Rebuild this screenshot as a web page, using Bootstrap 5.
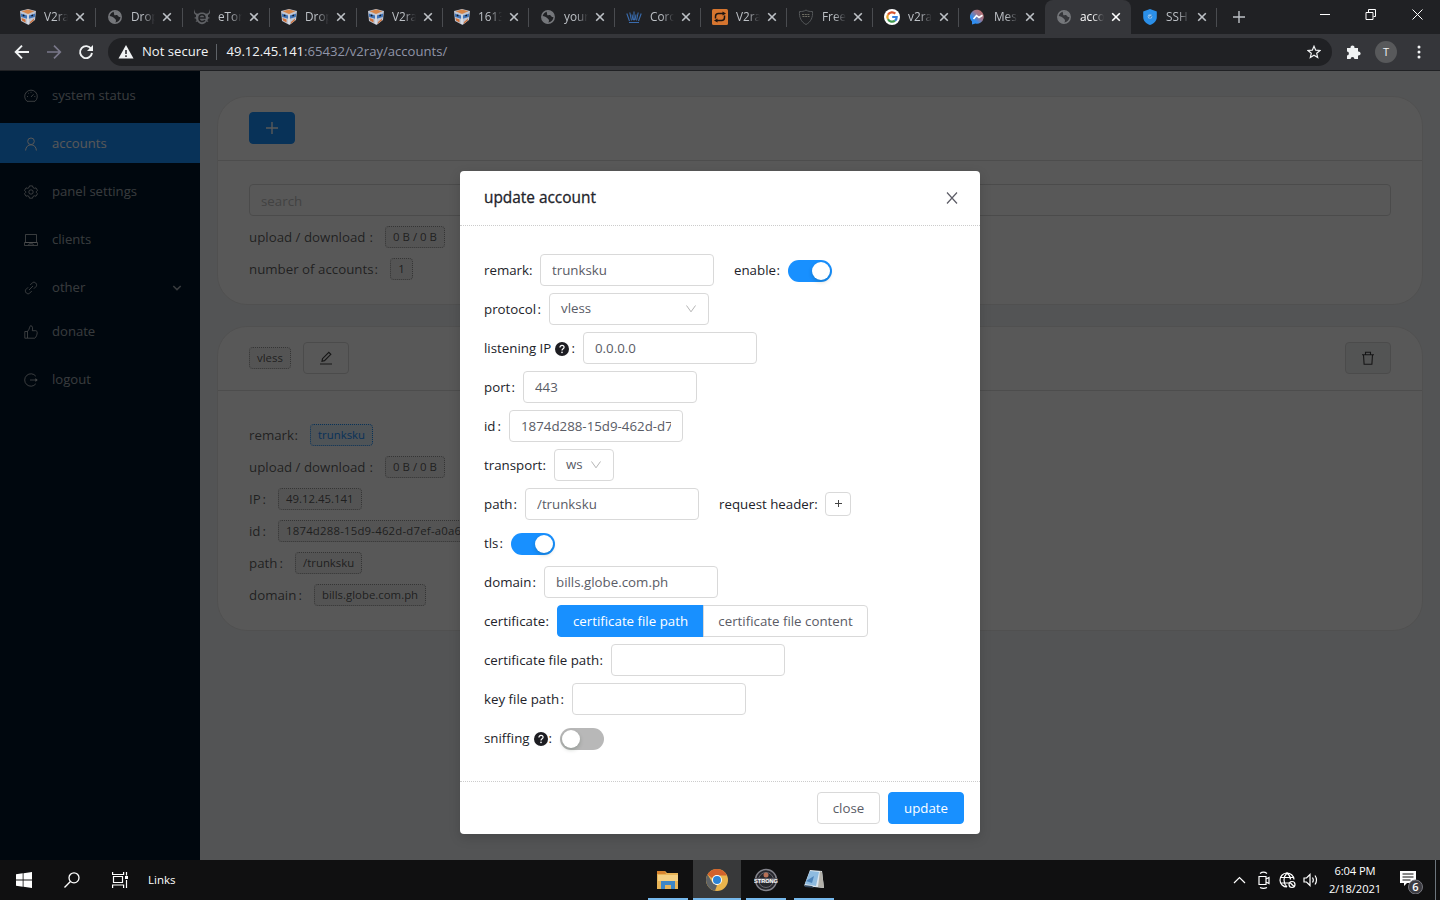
<!DOCTYPE html>
<html lang="en">
<head>
  <meta charset="UTF-8">
  <meta name="viewport" content="width=device-width, initial-scale=1">
  <title>accounts</title>
  <link href="https://cdn.jsdelivr.net/npm/bootstrap@5.3.2/dist/css/bootstrap.min.css" rel="stylesheet">
  <style>
    body { font: 13.3px/1.5 "Open Sans", "Noto Sans", sans-serif; background: #111; }
    svg { display: block; flex: none; }
    .ln { fill: none; stroke: currentColor; }
    .desktop { width: 1440px; height: 900px; }

    /* browser chrome */
    .tabstrip { height: 34px; background: #202124; padding-left: 9px; color: #bdc1c6; }
    .tab { width: 86px; height: 34px; padding-left: 11px; position: relative; font-size: 11.8px; flex: none; }
    .tab:nth-child(-n+4) { width: 87px; }
    .tab::after { content: ""; position: absolute; right: 0; top: 8px; height: 19px; width: 1px; background: #4a4c50; }
    .tab.current::after, .tab.before::after { display: none; }
    .tab.current { background: #35363a; color: #fff; border-radius: 8px 8px 0 0; }
    .tab-text { width: 24px; margin-left: 8px; overflow: hidden; white-space: nowrap;
      -webkit-mask-image: linear-gradient(90deg, #000 50%, transparent 100%); mask-image: linear-gradient(90deg, #000 50%, transparent 100%); }
    .tab-x { margin-left: 7px; }
    .win-ctl { padding: 8px 13px 0 0; }
    .toolbar { height: 37px; background: #35363a; border-bottom: 1px solid #202124; color: #f1f3f4; padding-left: 14px; }
    .omnibox { width: 1224px; height: 28px; border-radius: 14px; background: #202124; margin-left: 14px; padding: 0 11px 0 10px; font-size: 13.1px; }
    .omnibox .rule { width: 1px; height: 16px; background: #5f6368; margin: 0 9px 0 8px; }
    .omnibox .rest { color: #9095a8; }
    .ext { margin-left: 14px; }
    .avatar { width: 22px; height: 22px; border-radius: 50%; background: #58595b; font-size: 11px; margin: 0 20px 0 13px; }

    /* panel */
    .viewport { height: 789px; position: relative; background: #f0f2f5; overflow: hidden; }
    .side { width: 200px; background: #001529; padding-top: 4px; font-size: 13.1px; }
    .side a { height: 40px; margin-bottom: 8px; padding: 2px 18px 0 24px; color: rgba(255,255,255,.65); text-decoration: none; }
    .side a svg { margin: -1px 14px 0 0; }
    .side a.on { background: #1890ff; color: #fff; }
    .side a.sub { margin-bottom: 4px; }
    .content-area { padding: 25px 17px 0; }
    .panel-card { border: 1px solid #e8e8e8; border-radius: 30px; background: #fff; margin-bottom: 21px; color: rgba(0,0,0,.65); }
    .panel-head { height: 64px; padding: 0 31px 2px; border-bottom: 1px solid #e0e0e0; }
    .panel-card .list { padding: 0 31px; }
    .panel-card .sum { padding-top: 23px; height: 143px; }
    .panel-card .detail { padding-top: 28px; height: 239px; }
    .info { height: 32px; }
    .info .k { display: flex; justify-content: space-between; padding: 1px 12px 0 0; }
    .chip { height: 22px; line-height: 20px; font-size: 11.4px; padding: 0 7px; border: 1px dotted #999; border-radius: 4px; background: #f2f2f2; white-space: nowrap; text-align: center; }
    .chip.blue { color: #1890ff; border-color: #1890ff; background: #e6f2fd; }
    .chip.wide { letter-spacing: .2px; }
    .sq { width: 46px; height: 32px; padding: 0; display: flex; align-items: center; justify-content: center; border-radius: 4px; border: 1px solid #d9d9d9; color: rgba(0,0,0,.75); }
    .sq.off { background: #f0f2f3; }
    .edit { margin-left: 12px; }
    .main-btn { background: #1890ff; border-color: #1890ff; color: #fff; }
    .w23{width:23px}.w25{width:25px}.w27{width:27px}.w29{width:29px}.w39{width:39px}.w41{width:41px}.w46{width:46px}.w54{width:54px}
    .w56{width:56px}.w60{width:60px}.w61{width:61px}.w65{width:65px}.w70{width:70px}.w73{width:73px}.w76{width:76px}
    .w88{width:88px}.w99{width:99px}.w106{width:106px}.w127{width:127px}.w136{width:136px}.w141{width:141px}

    /* dialog */
    .shade { position: absolute; inset: 0; background: rgba(0,0,0,.655); }
    .viewport .modal { position: absolute; overflow: hidden; }
    .viewport .modal-dialog { width: 520px; max-width: 520px; margin: 100px auto 0; }
    .modal-content { height: 663px; border: 0; border-radius: 4px; color: #22232a; box-shadow: 0 4px 12px rgba(0,0,0,.15); }
    .modal-header { height: 55px; padding: 0 22px 0 24px; border-bottom: 1px dotted #ccc; }
    .modal-title { font-size: 15.4px; font-weight: 500; line-height: 22px; -webkit-text-stroke: .3px; }
    .modal-body { padding: 24px 24px 0; }
    .modal-footer { height: 53px; padding: 0 16px; gap: 8px; border-top: 1px dotted #ccc; }
    .modal-footer .btn { margin: 0; }
    .line { height: 39px; }
    .line .k { display: flex; align-items: center; padding: 2px 8px 0 0; white-space: nowrap; }
    .line .k i { font-style: normal; margin-left: auto; }
    .box, .search { height: 32px; border: 1px solid #d9d9d9; border-radius: 4px; padding: 0 11px; font-size: 13.3px; color: #5a5c66; }
    .box { width: 174px; margin-right: 20px; }
    .box.pick { display: flex; align-items: center; justify-content: space-between; color: #5a5c66; }
    .box.proto { width: 160px; }
    .box.trans { width: 60px; }
    .search { padding-top: 2px; margin-bottom: 5px; }
    .search::placeholder { color: #bfbfbf; }
    .toggle { width: 44px; height: 22px; border-radius: 11px; background: #1890ff; padding: 2px; display: flex; justify-content: flex-end; margin-top: 3px; }
    .toggle b { width: 18px; height: 18px; border-radius: 50%; background: #fff; box-shadow: 0 2px 4px rgba(0,35,11,.2); }
    .toggle.no { background: #b8b8b8; justify-content: flex-start; }
    .plus-sm { width: 26px; height: 24px; padding: 0; display: flex; align-items: center; justify-content: center; border: 1px solid #d9d9d9; border-radius: 4px; color: #444; }
    .seg { height: 32px; font-size: 13.3px; padding: 0; line-height: 30px; border-radius: 4px; border: 1px solid #d9d9d9; color: #5a5c66; }
    .seg.main-btn { color: #fff; border-color: #1890ff; }
    .seg-a { width: 147px; } .seg-b { width: 165px; }
    .seg-close { width: 63px; } .seg-ok { width: 76px; }

    /* taskbar */
    .taskbar { height: 40px; background: #101011; color: #fff; }
    .task { height: 40px; border-bottom: 2px solid #76b9ed; padding-top: 2px; display: flex; align-items: center; justify-content: center; width: 40px; }
    .task.front { width: 48px; background: #38393a; }
    .task-gap { margin-left: 5px; }
    .clock { font-size: 11.2px; line-height: 18px; text-align: center; width: 56px; letter-spacing: -.1px; white-space: nowrap; }
    .start { width: 648px; padding-left: 16px; gap: 32px; }
    .start span { font-size: 11.5px; margin-left: -13px; }
    .edge { height: 40px; width: 5px; margin-left: 10px; }
  </style>
</head>
<body>
  <svg width="0" height="0" class="position-absolute">
    <defs>
      <symbol id="cube" viewBox="0 0 16 16">
        <path d="M0 2l8-2 8 2-1 9-6.500 5L1 12z" fill="#bfc5d2"/>
        <path d="M1.500 2.300L8 .6l6.500 1.600L8 5z" fill="#d58549"/>
        <path d="M.8 4.500l6.400 2v3.200L1.200 8zM15.200 4.500L8.800 6.500v3.200l6-1.700z" fill="#3f73b8"/>
        <path d="M1.500 9l4 1.500v3L2 11.500zM10 13l4-3.500-.2 2L9.500 15z" fill="#cf7038"/>
        <path d="M2.800 6.200l1.600.6M11.400 6.900l1.600-.6" stroke="#15181f" stroke-width="1.500"/>
        <path d="M8 5.500V15" stroke="#eef0f4"/>
      </symbol>
      <symbol id="globe" viewBox="0 0 16 16">
        <circle cx="8" cy="8" r="6.200" fill="none" stroke="#75777b" stroke-width="1.500"/>
        <path d="M2 7c3 0 4 1 5 2s2 1 2 3l-1 2.500C4 14 2 11 2 7zM7 2c-1 2 1 3 0 4 2 1 3-1 4 1 1 1.500 3 1 3 1 0-3-2-6-7-6z" fill="#75777b"/>
      </symbol>
      <symbol id="x" viewBox="0 0 10 10"><path d="M1.200 1.200l7.600 7.600M8.800 1.200L1.200 8.800" stroke="currentColor" stroke-width="1.600"/></symbol>
      <symbol id="down" viewBox="0 0 12 12"><path d="M1.500 2.500L6 8.800l4.500-6.300" fill="none" stroke="#b5b5b5"/></symbol>
      <symbol id="help" viewBox="0 0 14 14"><circle cx="7" cy="7" r="7" fill="#1d1d22"/><path d="M4.900 5.500c0-1.400 1-2.100 2.100-2.100s2.100.7 2.100 1.900c0 1.400-2.100 1.500-2.100 3.100" fill="none" stroke="#fff" stroke-width="1.200"/><circle cx="7" cy="10.400" r=".8" fill="#fff"/></symbol>
      <symbol id="plus" viewBox="0 0 12 12"><path d="M6 0v12M0 6h12" stroke="currentColor" stroke-width="1.400"/></symbol>
    </defs>
  </svg>

  <div class="desktop d-flex flex-column">
    <!-- Tabs -->
    <div class="tabstrip d-flex">
      <div class="tab d-flex align-items-center"><svg width="16" height="16"><use href="#cube"/></svg><span class="tab-text">V2ray</span><svg class="tab-x" width="10" height="10"><use href="#x"/></svg></div>
      <div class="tab d-flex align-items-center"><svg width="16" height="16"><use href="#globe"/></svg><span class="tab-text">Dropb</span><svg class="tab-x" width="10" height="10"><use href="#x"/></svg></div>
      <div class="tab d-flex align-items-center"><svg width="16" height="16" viewBox="0 0 16 16"><path d="M1 0c-1 3 .5 4.500 3 4.800C6 3 10 3 12 4.800 14.500 4.500 16 3 15 0c2 3 1 5-1 6v2l2 1-2 .8-.5 1.700 1 1.500-2-.5C10 16 6 16 3.500 12.500l-2 .5 1-1.500L2 9.800 0 9l2-1V6C0 5-1 3 1 0z" fill="#5f6165"/><path d="M5 9h6c0-4.500-6-4.500-6 0 0 4 4 4.300 6 2.300" fill="none" stroke="#202124" stroke-width="1.500"/></svg><span class="tab-text">eToro</span><svg class="tab-x" width="10" height="10"><use href="#x"/></svg></div>
      <div class="tab d-flex align-items-center"><svg width="16" height="16"><use href="#cube"/></svg><span class="tab-text">Dropb</span><svg class="tab-x" width="10" height="10"><use href="#x"/></svg></div>
      <div class="tab d-flex align-items-center"><svg width="16" height="16"><use href="#cube"/></svg><span class="tab-text">V2ray</span><svg class="tab-x" width="10" height="10"><use href="#x"/></svg></div>
      <div class="tab d-flex align-items-center"><svg width="16" height="16"><use href="#cube"/></svg><span class="tab-text">1613</span><svg class="tab-x" width="10" height="10"><use href="#x"/></svg></div>
      <div class="tab d-flex align-items-center"><svg width="16" height="16"><use href="#globe"/></svg><span class="tab-text">your</span><svg class="tab-x" width="10" height="10"><use href="#x"/></svg></div>
      <div class="tab d-flex align-items-center"><svg width="16" height="16" viewBox="0 0 16 16"><path fill="none" stroke="#3a6cae" stroke-width="1.100" d="M.8 4.500L3.500 12M3.800 3.500L5.500 11.500M8 2.500v9M12.200 3.500l-1.700 8M15.200 4.500L12.500 12M6 5.500l1 5.500M10 5.500L9 11M3 13.500h10"/></svg><span class="tab-text">Corona</span><svg class="tab-x" width="10" height="10"><use href="#x"/></svg></div>
      <div class="tab d-flex align-items-center"><svg width="16" height="16" viewBox="0 0 16 16"><rect width="16" height="16" rx="1.500" fill="#d6752f"/><path fill="none" stroke="#1d1512" stroke-width="1.500" d="M3.500 9.500V7.500C3.500 5.500 4.500 4.500 6.500 4.500H11M12.500 6.500v2c0 2-1 3-3 3H5"/><path d="M10.500 2.500l3.500 2-3.500 2zM5.500 9.500L2 11.500l3.500 2z" fill="#1d1512"/></svg><span class="tab-text">V2ray</span><svg class="tab-x" width="10" height="10"><use href="#x"/></svg></div>
      <div class="tab d-flex align-items-center"><svg width="16" height="16" viewBox="0 0 16 16"><path fill="none" stroke="#55585a" d="M8 1c2 1.500 4 1.500 6.500 1.500C15 8 13 13 8 15.500 3 13 1 8 1.500 2.500 4 2.500 6 2.500 8 1z"/><path fill="none" stroke="#6d6c62" stroke-width="1.200" d="M4 5.500h8M4.500 7.500h7" stroke-dasharray="2 .7"/></svg><span class="tab-text">Free S</span><svg class="tab-x" width="10" height="10"><use href="#x"/></svg></div>
      <div class="tab d-flex align-items-center"><svg width="16" height="16" viewBox="0 0 16 16"><circle cx="8" cy="8" r="8" fill="#fff"/><g fill="none" stroke-width="2.200"><path d="M11.300 4.600A4.700 4.700 0 0 0 4 5.600" stroke="#d9552f"/><path d="M4 5.600a4.700 4.700 0 0 0 0 4.700" stroke="#eaa52d"/><path d="M4 10.300a4.700 4.700 0 0 0 7 1.400" stroke="#419a50"/><path d="M11 11.700A4.700 4.700 0 0 0 12.700 8H8.200" stroke="#377fdc"/></g></svg><span class="tab-text">v2ray</span><svg class="tab-x" width="10" height="10"><use href="#x"/></svg></div>
      <div class="tab before d-flex align-items-center"><svg width="16" height="16" viewBox="0 0 16 16"><defs><linearGradient id="msg" x1="0" y1="1" x2="1" y2="0"><stop offset=".3" stop-color="#2f8df0"/><stop offset=".6" stop-color="#9b7790"/><stop offset="1" stop-color="#c4665a"/></linearGradient></defs><path d="M8 .8a7 7 0 1 1-2.500 13.800L2 15.600v-3A7 7 0 0 1 8 .8z" fill="url(#msg)"/><path d="M3.500 10l3-3.500 2.500 2 3.500-2.200" fill="none" stroke="#fff" stroke-width="1.600"/></svg><span class="tab-text">Mess</span><svg class="tab-x" width="10" height="10"><use href="#x"/></svg></div>
      <div class="tab current d-flex align-items-center"><svg width="16" height="16"><use href="#globe"/></svg><span class="tab-text">accounts</span><svg class="tab-x" width="10" height="10"><use href="#x"/></svg></div>
      <div class="tab d-flex align-items-center"><svg width="16" height="16" viewBox="0 0 16 16"><path d="M8 0l6.800 2.500V8c0 4-3 6.800-6.800 8-3.800-1.200-6.800-4-6.800-8V2.500z" fill="#2b8fe8"/><circle cx="8" cy="7.500" r="2.300" fill="#8cc2f2"/><path d="M7 7.500l1 1 1.800-2" fill="none" stroke="#145a9c"/></svg><span class="tab-text">SSH S</span><svg class="tab-x" width="10" height="10"><use href="#x"/></svg></div>
      <div class="d-flex align-items-center ps-3"><svg width="12" height="12"><use href="#plus"/></svg></div>
      <div class="win-ctl d-flex ms-auto text-white">
        <svg width="108" height="14" viewBox="0 0 108 14"><path class="ln" d="M1 6.500h10M47 4.500h7v7h-7zM49.500 4V1.500h7v7H54.500M93.500 1.500l10 10M103.500 1.500l-10 10"/></svg>
      </div>
    </div>

    <!-- Address bar -->
    <div class="toolbar d-flex align-items-center">
      <svg width="16" height="16" viewBox="0 0 16 16"><path class="ln" stroke-width="1.900" d="M15 8H2M8 1.700L1.700 8 8 14.300"/></svg>
      <svg width="16" height="16" viewBox="0 0 16 16" class="ms-3"><path fill="none" stroke="#7a788a" stroke-width="1.700" d="M1 8h13M8 1.700L14.300 8 8 14.300"/></svg>
      <svg width="16" height="16" viewBox="0 0 16 16" class="ms-3"><path class="ln" stroke-width="1.900" d="M13.200 5A6 6 0 1 0 14 9"/><path d="M15 1v6H9z" fill="currentColor"/></svg>
      <div class="omnibox d-flex align-items-center">
        <svg width="16" height="16" viewBox="0 0 16 16"><path d="M8 1l7.500 13.500H.5z" fill="#f1f3f4"/><path d="M8 6v4M8 11.300v1.600" stroke="#202124" stroke-width="1.500"/></svg>
        <span class="ms-2">Not secure</span><span class="rule"></span>
        <span>49.12.45.141<span class="rest">:65432/v2ray/accounts/</span></span>
        <svg width="14" height="14" viewBox="0 0 14 14" class="ms-auto"><path class="ln" stroke-width="1.200" d="M7 1.200l1.700 4 4.300.3-3.300 2.800 1 4.200L7 10.200l-3.700 2.300 1-4.200L1 5.500l4.300-.3z"/></svg>
      </div>
      <svg width="16" height="16" viewBox="0 0 16 16" class="ext"><path fill="currentColor" d="M1 4h3.600a2 2 0 1 1 3.800 0H12v3.600a2 2 0 1 1 0 3.800V15H8.400a1.900 1.900 0 0 0-3.800 0H1v-3.600a1.900 1.900 0 0 0 0-3.800z"/></svg>
      <span class="avatar d-flex align-items-center justify-content-center">T</span>
      <svg width="4" height="14" viewBox="0 0 4 14"><g fill="currentColor"><circle cx="2" cy="2" r="1.500"/><circle cx="2" cy="7" r="1.500"/><circle cx="2" cy="12" r="1.500"/></g></svg>
    </div>

    <!-- Page -->
    <div class="viewport d-flex">
      <nav class="side flex-shrink-0">
        <a href="#" class="d-flex align-items-center"><svg width="14" height="14" viewBox="0 0 14 14"><path class="ln" d="M3 12.300a6.300 6.300 0 1 1 8 0zM7 8l2.500-2.700M3 7.500h1M10.300 7.500h1M7 2.800v1M4.200 4l.7.700"/></svg>system status</a>
        <a href="#" class="on d-flex align-items-center"><svg width="14" height="14" viewBox="0 0 14 14"><circle class="ln" cx="7" cy="4.300" r="3.300"/><path class="ln" d="M1.600 13.500c.2-3.500 2.400-5.700 5.400-5.700s5.200 2.200 5.400 5.700"/></svg>accounts</a>
        <a href="#" class="d-flex align-items-center"><svg width="14" height="14" viewBox="0 0 14 14"><circle class="ln" cx="7" cy="7" r="2.200"/><path class="ln" d="M5.500.9h3l.5 1.700 1.300.7 1.700-.4 1.500 2.500L12.300 6.700v.8l1.200 1.200-1.500 2.500-1.700-.4-1.300.7-.5 1.700h-3L5 11.500l-1.300-.7-1.700.4L.5 8.700l1.200-1.200v-.8L.5 5.400 2 2.900l1.700.4L5 2.600z"/></svg>panel settings</a>
        <a href="#" class="d-flex align-items-center"><svg width="14" height="14" viewBox="0 0 14 14"><path class="ln" d="M1.500 1.500h11v8h-11zM.5 9.500h13v3H.500zM4.500 12l.8-1.200h3.400l.8 1.200"/></svg>clients</a>
        <a href="#" class="sub d-flex align-items-center"><svg width="14" height="14" viewBox="0 0 14 14"><path class="ln" d="M6.200 4L8.500 1.700c2-1.700 5.300 1.300 3.700 3.700L9.900 7.700M7.800 10l-2.300 2.300c-2 1.700-5.300-1.300-3.700-3.700l2.300-2.300M5 9l4-4"/></svg>other<svg width="10" height="8" viewBox="0 0 10 8" class="ms-auto me-0"><path class="ln" stroke-width="1.500" d="M1.300 2L5 5.600 8.700 2"/></svg></a>
        <a href="#" class="d-flex align-items-center"><svg width="14" height="14" viewBox="0 0 14 14"><path class="ln" d="M3.500 6.500H.8v6.700h10c1.500-1 2.400-4 2.400-5.500 0-1-.5-2-1.500-2H8.300c.5-2 .5-5-1.500-5C5.300.7 6 4 3.500 6.500zM3.500 6.500V13"/></svg>donate</a>
        <a href="#" class="d-flex align-items-center"><svg width="14" height="14" viewBox="0 0 14 14"><path class="ln" d="M11.800 3.200a6.200 6.200 0 1 0 0 7.600M6 7h7"/><path d="M11.300 5l2.500 2-2.500 2z" fill="currentColor"/></svg>logout</a>
      </nav>

      <main class="content-area flex-grow-1">
        <div class="card panel-card">
          <div class="panel-head d-flex align-items-center">
            <button class="btn sq main-btn"><svg width="12" height="12"><use href="#plus"/></svg></button>
          </div>
          <div class="list sum">
            <input class="search form-control" placeholder="search">
            <div class="info d-flex align-items-center"><span class="k w136">upload / download<i class="fst-normal">:</i></span><span class="chip w60">0 B / 0 B</span></div>
            <div class="info d-flex align-items-center"><span class="k w141">number of accounts<i class="fst-normal">:</i></span><span class="chip w23">1</span></div>
          </div>
        </div>

        <div class="card panel-card">
          <div class="panel-head d-flex align-items-center">
            <span class="chip">vless</span>
            <button class="btn sq edit"><svg width="14" height="14" viewBox="0 0 14 14"><path class="ln" stroke-width="1.200" d="M1 13h12M3 10.300l.5-2.600L9.800 1.300l2 2-6.300 6.400z"/></svg></button>
            <button class="btn sq off ms-auto"><svg width="14" height="14" viewBox="0 0 14 14"><path class="ln" stroke-width="1.100" d="M1 3.700h12M4.500 3.500V1.200h5v2.300M2.500 3.700l.6 9.600h7.800l.6-9.600"/></svg></button>
          </div>
          <div class="list detail">
            <div class="info d-flex align-items-center"><span class="k w61">remark<i class="fst-normal">:</i></span><span class="chip blue">trunksku</span></div>
            <div class="info d-flex align-items-center"><span class="k w136">upload / download<i class="fst-normal">:</i></span><span class="chip w60">0 B / 0 B</span></div>
            <div class="info d-flex align-items-center"><span class="k w29">IP<i class="fst-normal">:</i></span><span class="chip">49.12.45.141</span></div>
            <div class="info d-flex align-items-center"><span class="k w29">id<i class="fst-normal">:</i></span><span class="chip wide">1874d288-15d9-462d-d7ef-a0a6</span></div>
            <div class="info d-flex align-items-center"><span class="k w46">path<i class="fst-normal">:</i></span><span class="chip">/trunksku</span></div>
            <div class="info d-flex align-items-center"><span class="k w65">domain<i class="fst-normal">:</i></span><span class="chip">bills.globe.com.ph</span></div>
          </div>
        </div>
      </main>

      <!-- Update account dialog -->
      <div class="shade"></div>
      <div class="modal d-block" tabindex="-1">
        <div class="modal-dialog">
          <form class="modal-content">
            <div class="modal-header">
              <h5 class="modal-title">update account</h5>
              <svg width="12" height="12" viewBox="0 0 12 12"><path fill="none" stroke="#5c5c66" stroke-width="1.200" d="M1 .5l10 11M11 .5l-10 11"/></svg>
            </div>
            <div class="modal-body">
              <div class="line d-flex align-items-center"><label class="k w56">remark<i>:</i></label><input class="box form-control" value="trunksku"><label class="k w54">enable<i>:</i></label><span class="toggle"><b></b></span></div>
              <div class="line d-flex align-items-center"><label class="k w65">protocol<i>:</i></label><div class="box pick proto">vless<svg width="12" height="12"><use href="#down"/></svg></div></div>
              <div class="line d-flex align-items-center"><label class="k w99">listening IP<svg class="ms-1" width="14" height="14"><use href="#help"/></svg><i>:</i></label><input class="box form-control" value="0.0.0.0"></div>
              <div class="line d-flex align-items-center"><label class="k w39">port<i>:</i></label><input class="box form-control" value="443"></div>
              <div class="line d-flex align-items-center"><label class="k w25">id<i>:</i></label><input class="box form-control" value="1874d288-15d9-462d-d7ef-a0a6"></div>
              <div class="line d-flex align-items-center"><label class="k w70">transport<i>:</i></label><div class="box pick trans">ws<svg width="12" height="12"><use href="#down"/></svg></div></div>
              <div class="line d-flex align-items-center"><label class="k w41">path<i>:</i></label><input class="box form-control" value="/trunksku"><label class="k w106">request header<i>:</i></label><button type="button" class="btn plus-sm"><svg width="7" height="7" viewBox="0 0 7 7"><path d="M3.500 0v7M0 3.500h7" stroke="currentColor"/></svg></button></div>
              <div class="line d-flex align-items-center"><label class="k w27">tls<i>:</i></label><span class="toggle"><b></b></span></div>
              <div class="line d-flex align-items-center"><label class="k w60">domain<i>:</i></label><input class="box form-control" value="bills.globe.com.ph"></div>
              <div class="line d-flex align-items-center"><label class="k w73">certificate<i>:</i></label>
                <div class="btn-group"><button type="button" class="btn seg seg-a main-btn">certificate file path</button><button type="button" class="btn seg seg-b">certificate file content</button></div>
              </div>
              <div class="line d-flex align-items-center"><label class="k w127">certificate file path<i>:</i></label><input class="box form-control"></div>
              <div class="line d-flex align-items-center"><label class="k w88">key file path<i>:</i></label><input class="box form-control"></div>
              <div class="line d-flex align-items-center"><label class="k w76">sniffing<svg class="ms-1" width="14" height="14"><use href="#help"/></svg><i>:</i></label><span class="toggle no"><b></b></span></div>
            </div>
            <div class="modal-footer">
              <button type="button" class="btn seg seg-close">close</button>
              <button type="button" class="btn seg seg-ok main-btn">update</button>
            </div>
          </form>
        </div>
      </div>
    </div>

    <!-- Taskbar -->
    <div class="taskbar d-flex align-items-center">
      <div class="start d-flex align-items-center">
        <svg width="16" height="16" viewBox="0 0 16 16"><path fill="#fff" d="M0 2.200l6.700-.9v6.300H0zM7.500 1.200L16 0v7.600H7.500zM0 8.400h6.700v6.300L0 13.800zM7.500 8.400H16V16l-8.500-1.200z"/></svg>
        <svg width="16" height="16" viewBox="0 0 16 16"><circle class="ln" cx="10" cy="5.800" r="5" stroke-width="1.300"/><path class="ln" stroke-width="1.300" d="M6.400 9.500L.5 15.500"/></svg>
        <svg width="17" height="16" viewBox="0 0 17 16"><path class="ln" stroke-width="1.200" d="M1.500 4.500h9v6h-9zM.6 0v2.500h11V0M.6 16v-3h11v3M14.500 0v3.500M14.500 8v8"/><path fill="#fff" d="M13 4h3v3h-3z"/></svg>
        <span>Links</span>
      </div>
      <div class="task"><svg width="24" height="22" viewBox="0 0 24 22"><path d="M1 2h8l2 2h11v16H1z" fill="#e8b457"/><path d="M1 2h8l1 3H1z" fill="#d8842e"/><path d="M2 6h20v6H2z" fill="#f5d083"/><path d="M5 20v-8h14v8h-4v-4H9v4z" fill="#3d86c6"/></svg></div>
      <div class="task front task-gap"><svg width="22" height="22" viewBox="0 0 22 22"><circle cx="11" cy="11" r="11" fill="#e9b44c"/><path d="M1.500 5.500l5 8 4.500 3-2 5.300A11 11 0 0 1 1.500 5.500z" fill="#5d6266"/><path d="M1.500 5.500A11 11 0 0 1 20.500 5.500v1H9L6 9z" fill="#d2622c"/><circle cx="11" cy="11" r="5" fill="#fff"/><circle cx="11" cy="11" r="4" fill="#2c83d6"/></svg></div>
      <div class="task task-gap"><svg width="24" height="24" viewBox="0 0 24 24"><circle cx="12" cy="12" r="10.500" fill="#26262c" stroke="#83838b" stroke-width="1.400"/><circle cx="12" cy="12" r="7.500" fill="none" stroke="#66666e"/><circle cx="12" cy="7" r="2.500" fill="#b87157"/><path d="M.5 10h23v5H.5z" fill="#55555d"/><text x="12" y="14.600" text-anchor="middle" font-size="5.600" font-weight="700" font-family="Liberation Sans, sans-serif" fill="#fff">STRONG</text></svg></div>
      <div class="task ms-2"><svg width="24" height="24" viewBox="0 0 24 24"><path d="M8 2l12 1 2 17-20-2z" fill="#dce6ee"/><path d="M8 3l9 1-3 14-11-2z" fill="#8ebbe0"/><path d="M18 3l2 1 2 16-6-1z" fill="#b3b1aa"/><path d="M4 13l8-5-2 7z" fill="#4d84ba"/><path d="M2 17l8 1 2 2-9-1z" fill="#31465c"/></svg></div>
      <div class="d-flex align-items-center ms-auto">
        <svg width="86" height="18" viewBox="0 0 86 18"><g class="ln" stroke-width="1.200"><path d="M1 12l5.500-5.500L12 12"/><path d="M26 5.500h7v8h-7zM33 8l3-1.500v6L33 11M27 2.500c2-1.500 5-1.500 7 0M27 16.500c2 1 5 1 7 0"/><path d="M61 8.500A7 7 0 1 0 54 16M47.500 6.500h13M47.500 12H56M54 2c-4 4-4 10 0 14M54 2c2.500 2 3.500 4 3.500 6.500"/><circle cx="59" cy="13.500" r="3"/><path d="M57 11.500l4 4"/><path d="M71 7h2.500L77 3.500v11L73.500 11H71zM79.500 6.500c1 1.500 1 3.500 0 5M82 4.500c2 3 2 6 0 9"/></g></svg>
        <div class="clock ms-2">6:04 PM<br>2/18/2021</div>
        <svg width="26" height="28" viewBox="0 0 26 28" class="ms-3"><path fill="#fff" d="M1 5h16v12H8l-3 3v-3H1z"/><path d="M3.500 8h11M3.500 11h11M3.500 14h8" stroke="#111"/><circle cx="16.500" cy="21" r="7" fill="#3c3c42" stroke="#77777f"/><text x="16.500" y="25" text-anchor="middle" font-size="11" font-weight="600" fill="#fff">6</text></svg>
        <div class="edge border-start border-secondary"></div>
      </div>
    </div>
  </div>
  <script src="https://cdn.jsdelivr.net/npm/bootstrap@5.3.2/dist/js/bootstrap.bundle.min.js"></script>
</body>
</html>
